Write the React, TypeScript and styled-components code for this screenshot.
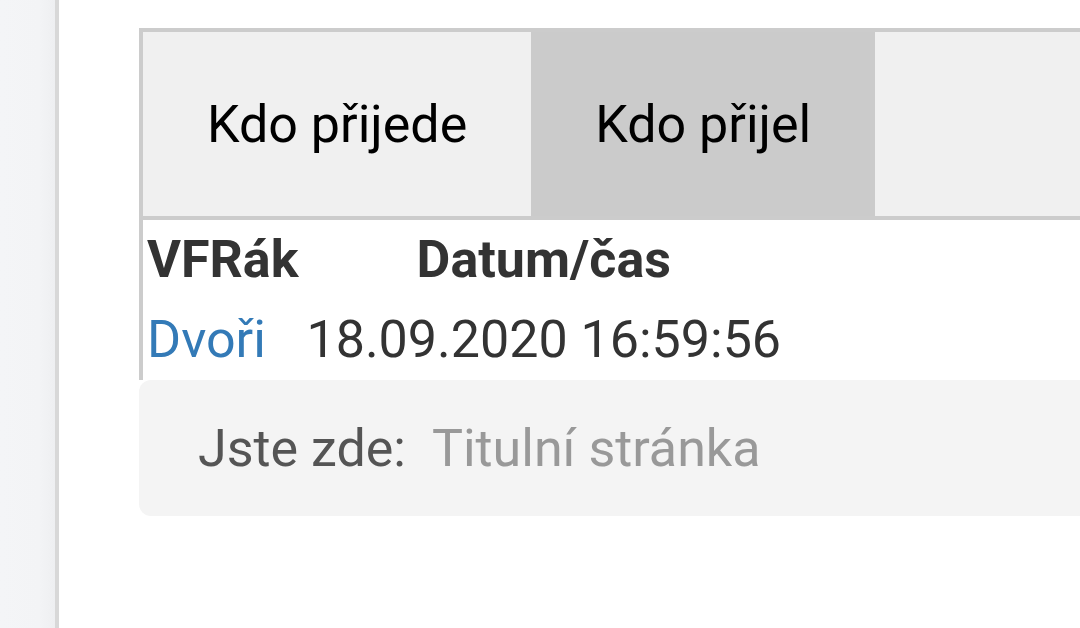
import React from "react";
import styled, { createGlobalStyle } from "styled-components";

const GlobalStyle = createGlobalStyle`
  html, body {
    margin: 0;
    padding: 0;
    background: #ffffff;
    font-family: Roboto, "Noto Sans", Arial, sans-serif;
  }
  #root {
    width: 1080px;
    height: 628px;
    overflow: hidden;
  }
`;

const Page = styled.div`
  display: flex;
  width: 1080px;
  height: 628px;
  overflow: hidden;
`;

const Sidebar = styled.aside`
  flex: 0 0 55px;
  background: linear-gradient(to right, #f4f5f7 0%, #f3f4f6 70%, #eeeff1 100%);
  border-right: 4px solid #d8d8d8;
`;

const Main = styled.main`
  flex: 1;
  min-width: 0;
  padding: 28px 0 0 80px;
  overflow: hidden;
`;

const Content = styled.div`
  width: 1100px;
`;

const TabBar = styled.nav`
  display: flex;
  height: 184px;
  background: #f0f0f0;
  border: 4px solid #cccccc;
`;

const Tab = styled.a<{ $active?: boolean }>`
  display: flex;
  align-items: center;
  padding: 0 64px;
  background: ${(p) => (p.$active ? "#cbcbcb" : "transparent")};
  color: #000000;
  font-size: 52px;
  text-decoration: none;
  white-space: nowrap;
`;

const TableWrap = styled.div`
  border-left: 4px solid #cccccc;
`;

const Table = styled.table`
  border-collapse: collapse;
  border-spacing: 0;
  color: #333333;
  font-size: 52px;
  line-height: 80px;
`;

const Th = styled.th`
  padding: 0 4px;
  font-weight: 700;
  text-align: center;
  white-space: nowrap;
`;

const Td = styled.td`
  padding: 0 4px;
  text-align: left;
  white-space: nowrap;
`;

const Link = styled.a`
  color: #337ab7;
  text-decoration: none;
`;

const Breadcrumb = styled.div`
  display: flex;
  align-items: center;
  height: 136px;
  padding-left: 59px;
  background: #f4f4f4;
  border-radius: 12px;
  font-size: 52px;
`;

const Label = styled.span`
  color: #555555;
  margin-right: 26px;
`;

const Crumb = styled.span`
  color: #999999;
`;

export default function App() {
  return (
    <>
      <GlobalStyle />
      <Page>
        <Sidebar />
        <Main>
          <Content>
            <TabBar>
              <Tab href="#">Kdo přijede</Tab>
              <Tab href="#" $active>
                Kdo přijel
              </Tab>
            </TabBar>
            <TableWrap>
              <Table>
                <thead>
                  <tr>
                    <Th>VFRák</Th>
                    <Th>Datum/čas</Th>
                  </tr>
                </thead>
                <tbody>
                  <tr>
                    <Td>
                      <Link href="#">Dvoři</Link>
                    </Td>
                    <Td>18.09.2020 16:59:56</Td>
                  </tr>
                </tbody>
              </Table>
            </TableWrap>
            <Breadcrumb>
              <Label>Jste zde:</Label>
              <Crumb>Titulní stránka</Crumb>
            </Breadcrumb>
          </Content>
        </Main>
      </Page>
    </>
  );
}
